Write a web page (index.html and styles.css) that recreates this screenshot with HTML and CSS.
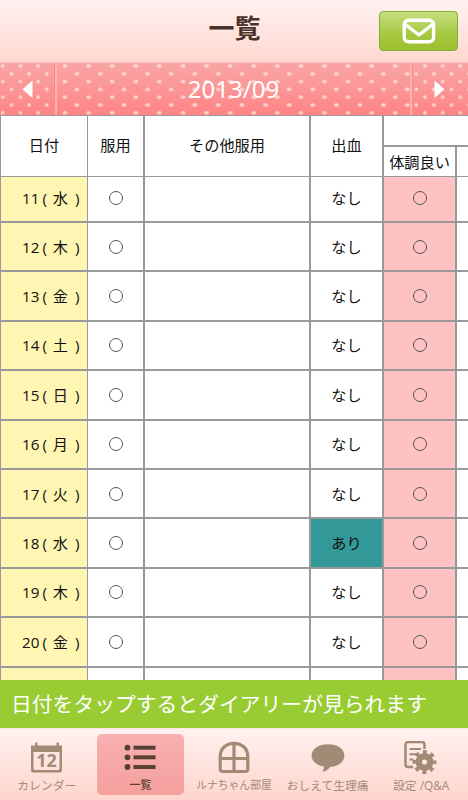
FILE: index.html
```html
<!DOCTYPE html>
<html lang="ja">
<head>
    <meta charset="UTF-8">
    <meta name="viewport" content="width=device-width, initial-scale=1.0">
    <title>一覧</title>
    <link rel="stylesheet" href="styles.css">
</head>
<body>
    <header>
        <h1>一覧</h1>
        <button class="mail-button" aria-label="メール">
            <svg width="34" height="26" viewBox="0 0 34 26" fill="none" stroke="#fff" stroke-width="3.4">
                <rect x="2.2" y="2.2" width="29.4" height="21.6" rx="4.5"/>
                <path d="M3.5 6.5 L17 17 L30.5 6.5" stroke-linejoin="round"/>
            </svg>
        </button>
    </header>

    <div class="month-bar">
        <button class="month-prev" aria-label="前の月">
            <svg width="11" height="19" viewBox="0 0 11 19"><path d="M10.5 0.5 V18 L0.5 9.2 Z" fill="#fff"/></svg>
        </button>
        <div class="month">2013/09</div>
        <button class="month-next" aria-label="次の月">
            <svg width="11" height="19" viewBox="0 0 11 19"><path d="M0.5 0.5 V18 L10.5 9.2 Z" fill="#fff"/></svg>
        </button>
    </div>

    <main>
        <div class="row table-head">
            <div class="cell">日付</div>
            <div class="cell">服用</div>
            <div class="cell">その他服用</div>
            <div class="cell">出血</div>
            <div class="group">
                <div class="group-title"></div>
                <div class="cell">体調良い</div>
                <div class="cell"></div>
            </div>
        </div>
        <div id="records"></div>
    </main>

    <div class="notice">日付をタップするとダイアリーが見られます</div>

    <nav>
        <a class="tab">
            <svg width="32" height="31" viewBox="0 0 32 31" fill="#a38a75">
                <path d="M3 3.5 H4 V0.5 H6.5 V3.5 H25.5 V0.5 H28 V3.5 H31 V28 Q31 30.5 28.5 30.5 H2.5 Q0 30.5 0 28 V3.5 Z M2.5 10 V26.5 Q2.5 28 4 28 H27 Q28.5 28 28.5 26.5 V10 Z" fill-rule="evenodd"/>
                <text x="15.6" y="25.2" text-anchor="middle" class="calendar-day">12</text>
            </svg>
            <span>カレンダー</span>
        </a>
        <a class="tab active">
            <svg width="32" height="31" viewBox="0 0 32 31" fill="#594035">
                <circle cx="3.5" cy="5.7" r="2.9"/><rect x="9.5" y="3.7" width="22" height="4"/>
                <circle cx="3.5" cy="15.3" r="2.9"/><rect x="9.5" y="13.3" width="22" height="4"/>
                <circle cx="3.5" cy="25" r="2.9"/><rect x="9.5" y="23" width="22" height="4"/>
            </svg>
            <span>一覧</span>
        </a>
        <a class="tab">
            <svg width="32" height="32" viewBox="0 0 32 32" fill="none" stroke="#a38a75" stroke-width="3.2">
                <path d="M2.2 15 C2.2 6.5 8.5 1.8 16 1.8 S29.8 6.5 29.8 15 V27.5 Q29.8 30 27.3 30 H4.7 Q2.2 30 2.2 27.5 Z"/>
                <path d="M16 2 V30 M2 17 H30"/>
            </svg>
            <span>ルナちゃん部屋</span>
        </a>
        <a class="tab">
            <svg width="34" height="31" viewBox="0 0 34 31" fill="#a38a75">
                <path d="M17 2.2 C26.5 2.2 33.4 7 33.4 13.5 C33.4 20 27 24.600 19 25 Q16.5 29 11 30 Q13 28 13 24.600 C5.5 23.400 0.6 19.300 0.6 13.500 C0.6 7 7.5 2.2 17 2.2 Z"/>
            </svg>
            <span>おしえて生理痛</span>
        </a>
        <a class="tab">
            <svg width="34" height="33" viewBox="0 0 34 33" fill="none" stroke="#a38a75">
                <path d="M9 26 H4 Q1.500 26 1.500 23.500 V3.500 Q1.500 1 4 1 H18 Q20.500 1 20.500 3.500 V8" stroke-width="2.500"/>
                <path d="M5.500 8 H17 M5.500 13.300 H12 M5.500 18.500 H9" stroke-width="2"/>
                <circle cx="20.500" cy="21" r="5.800" stroke-width="6.400"/>
                <circle cx="20.500" cy="21" r="10" stroke-width="4" stroke-dasharray="3.927 3.927" stroke-dashoffset="1.960"/>
            </svg>
            <span>設定 /Q&amp;A</span>
        </a>
    </nav>

    <script>
        const records = [
            { day: 11, week: "水", bleeding: false },
            { day: 12, week: "木", bleeding: false },
            { day: 13, week: "金", bleeding: false },
            { day: 14, week: "土", bleeding: false },
            { day: 15, week: "日", bleeding: false },
            { day: 16, week: "月", bleeding: false },
            { day: 17, week: "火", bleeding: false },
            { day: 18, week: "水", bleeding: true },
            { day: 19, week: "木", bleeding: false },
            { day: 20, week: "金", bleeding: false }
        ];
        const container = document.getElementById("records");

        records.forEach(record => {
            const row = document.createElement("div");
            row.className = "row";
            row.innerHTML = `
                <div class="cell date"><span>${record.day}</span><span>(</span><span>${record.week}</span><span>)</span></div>
                <div class="cell"><i class="circle"></i></div>
                <div class="cell"></div>
                <div class="cell ${record.bleeding ? "bleeding" : ""}">${record.bleeding ? "あり" : "なし"}</div>
                <div class="cell good"><i class="circle"></i></div>
                <div class="cell"></div>
            `;
            container.appendChild(row);
        });

        // the next row is cut off by the notice
        const last = document.createElement("div");
        last.className = "row";
        last.innerHTML = `<div class="cell date"></div><div class="cell"></div><div class="cell"></div>
            <div class="cell"></div><div class="cell good"></div><div class="cell"></div>`;
        container.appendChild(last);
    </script>
</body>
</html>
```

FILE: styles.css
```css
* {
    box-sizing: border-box;
}

body {
    margin: 0;
    width: 468px;
    height: 800px;
    overflow: hidden;
    display: flex;
    flex-direction: column;
    font-family: "Open Sans", "Noto Sans CJK JP", sans-serif;
    color: #111;
    background-color: #fff;
}

button {
    border: none;
    padding: 0;
    background: none;
    cursor: pointer;
}

header {
    flex: none;
    height: 62px;
    display: grid;
    grid-template-columns: 1fr auto 1fr;
    align-items: center;
    padding: 0 10px 0 11px;
    background: linear-gradient(#fff2f0, #ffd7d0);
}

h1 {
    grid-column: 2;
    margin: 0;
    padding-bottom: 6px;
    font-size: 26px;
    line-height: 36px;
    font-weight: 700;
    color: #49322a;
}

.mail-button {
    justify-self: end;
    width: 79px;
    height: 40px;
    display: flex;
    align-items: center;
    justify-content: center;
    border: 1px solid #7db32c;
    border-radius: 4px;
    background: linear-gradient(#c6dd82, #a5c840 60%, #9cc030);
}

.month-bar {
    flex: none;
    height: 53px;
    display: flex;
    border-top: 1px solid #ffb9b6;
    background: linear-gradient(#f9a5a5, #ff8485);
}

.month-prev,
.month-next {
    display: flex;
    align-items: center;
    background-image:
        radial-gradient(circle, rgba(255, 226, 222, 0.8) 1.3px, transparent 2.3px),
        radial-gradient(circle, rgba(255, 226, 222, 0.8) 1.3px, transparent 2.3px);
    background-size: 17.65px 15.6px;
}

.month-prev {
    width: 55px;
    padding-left: 22px;
    background-position: -6.1px -4.8px, 2.7px 3px;
    border-right: 1px solid #ff8585;
}

.month-next {
    width: 56px;
    padding-left: 21px;
    background-position: 3.2px -4.8px, -5.6px 3px;
    border-left: 1px solid #ff8888;
}

.month {
    flex: 1;
    text-align: center;
    font-family: "Noto Sans", sans-serif;
    font-size: 24px;
    line-height: 52px;
    color: #fff;
    border-left: 2px solid #ffb3b2;
    border-right: 2px solid #ffb3b2;
    background-image:
        radial-gradient(ellipse 3px 2.3px, rgba(255, 226, 222, 0.8) 55%, transparent 100%),
        radial-gradient(ellipse 3px 2.3px, rgba(255, 226, 222, 0.8) 55%, transparent 100%);
    background-size: 23.6px 15.6px;
    background-position: -3.8px -4.8px, 8px 3px;
}

main {
    flex: none;
    height: 565px;
    overflow: hidden;
    border-top: 1px solid #999;
    border-left: 1px solid #999;
}

.row {
    display: grid;
    grid-template-columns: 87px 57px 166px 73px 73px 1fr;
    height: 49.4px;
}

.row:first-child {
    height: 46px;
}

.row.table-head {
    height: 61px;
}

.cell {
    display: flex;
    align-items: center;
    justify-content: center;
    border-right: 2px solid #999;
    border-bottom: 2px solid #999;
    font-size: 15.2px;
    line-height: 20px;
}

.row:first-child .cell {
    padding-bottom: 3px;
}

.cell:first-child {
    border-right-width: 1px;
}

.row .cell:last-child {
    border-right: none;
}

.table-head .cell {
    border-bottom-width: 1px;
}

.group {
    grid-column: 5 / 7;
    display: grid;
    grid-template-columns: 73px 1fr;
    grid-template-rows: 31px 30px;
}

.row .group .cell {
    padding-bottom: 0;
    white-space: nowrap;
}

.group-title {
    grid-column: 1 / 3;
    border-bottom: 2px solid #999;
}

.date {
    justify-content: flex-start;
    padding-left: 21px;
    background-color: #fff6b3;
}

.date span:nth-child(2) {
    margin: 0 6px 0 3px;
}

.date span:nth-child(4) {
    margin-left: 7px;
}

.good {
    background-color: #ffc2c2;
}

.bleeding {
    background-color: #339999;
}

.circle {
    width: 14px;
    height: 14px;
    border: 1px solid #555;
    border-radius: 50%;
}

.notice {
    flex: none;
    height: 48px;
    padding-left: 11px;
    font-size: 20.8px;
    line-height: 49px;
    white-space: nowrap;
    color: #fff;
    background-color: #99cc33;
}

nav {
    flex: 1;
    display: flex;
    border-top: 1px solid #ffe5df;
    background: linear-gradient(#fff1ef, #ffd5cd);
}

.tab {
    flex: 1 1 0;
    min-width: 0;
    display: flex;
    flex-direction: column;
    align-items: center;
    height: 61px;
    margin: 5px 3px 0;
    padding-top: 7px;
    border-radius: 5px;
    font-size: 11.8px;
    line-height: 16px;
    white-space: nowrap;
    color: #a38a75;
}

.tab:nth-child(3) {
    font-size: 10.8px;
}

.tab svg {
    flex: none;
    height: 33px;
    margin-bottom: 3px;
}

.tab.active {
    font-size: 11px;
    font-weight: 500;
    color: #594035;
    background: linear-gradient(#f8b0b0, #f4a09e);
}

.calendar-day {
    font-family: "Open Sans", sans-serif;
    font-size: 18px;
    font-weight: 700;
}
```
